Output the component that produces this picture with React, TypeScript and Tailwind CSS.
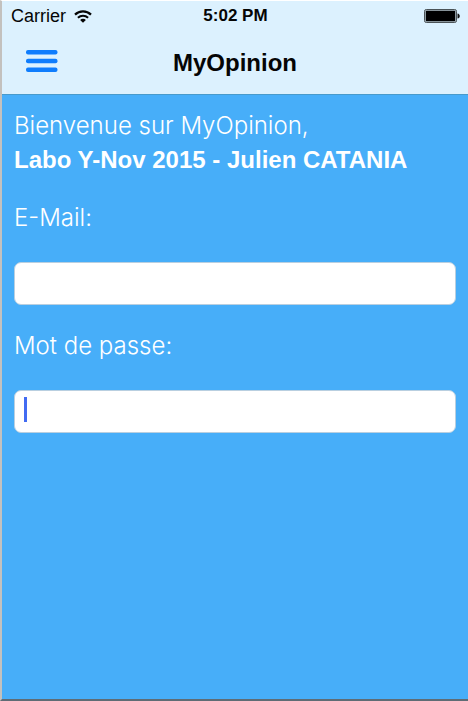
import type { InputHTMLAttributes } from "react";

function WifiIcon() {
  return (
    <svg viewBox="0 0 18 13" className="h-[13px] w-[18px]" fill="none" aria-hidden="true">
      <path d="M1 4.6C5.4.3 12.6.3 17 4.6" stroke="#050505" strokeWidth="2.2" />
      <path d="M3.9 7.7C6.8 5 11.2 5 14.1 7.7" stroke="#050505" strokeWidth="2" />
      <path d="M9 12.8 6.1 9.9C7.7 8.5 10.3 8.5 11.9 9.9Z" fill="#050505" />
    </svg>
  );
}

function BatteryIcon() {
  return (
    <svg viewBox="0 0 36 14" className="h-[14px] w-[36px]" aria-hidden="true">
      <rect x=".5" y=".5" width="32" height="13" rx="1.8" fill="#b4c4cd" stroke="#4b5357" />
      <rect x="1.8" y="1.8" width="29.4" height="10.4" rx=".6" fill="#000" />
      <path d="M33.5 4.4c3 .3 3 4.9 0 5.2z" fill="#151515" />
    </svg>
  );
}

function MenuIcon() {
  return (
    <svg viewBox="0 0 32 22" className="h-[22px] w-8" fill="#0f7dfd" aria-hidden="true">
      <rect width="31.5" height="4.4" rx="2" />
      <rect y="8.8" width="31.5" height="4.4" rx="2" />
      <rect y="17.6" width="31.5" height="4.4" rx="2" />
    </svg>
  );
}

function Field({ id, label, ...input }: InputHTMLAttributes<HTMLInputElement> & { id: string; label: string }) {
  return (
    <div className="flex flex-col gap-7">
      <label htmlFor={id} className="self-start leading-[33px]">
        {label}
      </label>
      <input
        id={id}
        {...input}
        className="h-[43px] w-full rounded-[7px] border border-[#b9cfe0] bg-white px-2 text-2xl text-black caret-[#426bf2] outline-none"
      />
    </div>
  );
}

export default function App() {
  return (
    <div className="flex min-h-screen flex-col border-t border-b-2 border-l-2 border-t-white border-b-[#5f6c75] border-l-[#c3c1be] bg-[#47aef9] font-['Inter','Helvetica_Neue',sans-serif]">
      <header className="border-b border-[#489acb] bg-[#dcf1fe] text-[#050505]">
        <div className="grid h-[30px] grid-cols-3 items-center pr-2 pl-[9px] font-['Liberation_Sans',sans-serif] text-lg">
          <div className="flex items-center gap-2">
            <span>Carrier</span>
            <WifiIcon />
          </div>
          <time className="text-center text-[17px] font-bold">5:02 PM</time>
          <div className="justify-self-end">
            <BatteryIcon />
          </div>
        </div>
        <div className="grid h-[63px] grid-cols-[48px_1fr_48px] items-center px-6">
          <button type="button" aria-label="Menu" className="h-11 w-11 pb-1">
            <MenuIcon />
          </button>
          <h1 className="text-center font-['Liberation_Sans',sans-serif] text-2xl font-bold">MyOpinion</h1>
        </div>
      </header>

      <main className="flex flex-col gap-6 px-3 pt-[14px] text-2xl font-light text-white">
        <p className="leading-[34px]">
          Bienvenue sur MyOpinion,
          <br />
          <strong className="font-['Liberation_Sans',sans-serif] font-bold">Labo Y-Nov 2015 - Julien CATANIA</strong>
        </p>
        <form className="flex flex-col gap-6">
          <Field id="email" label="E-Mail:" type="email" />
          <div className="relative">
            <Field id="password" label="Mot de passe:" type="password" />
            <span className="pointer-events-none absolute bottom-[11px] left-[10px] h-[25px] w-[3px] bg-[#426bf2]" />
          </div>
        </form>
      </main>
    </div>
  );
}
